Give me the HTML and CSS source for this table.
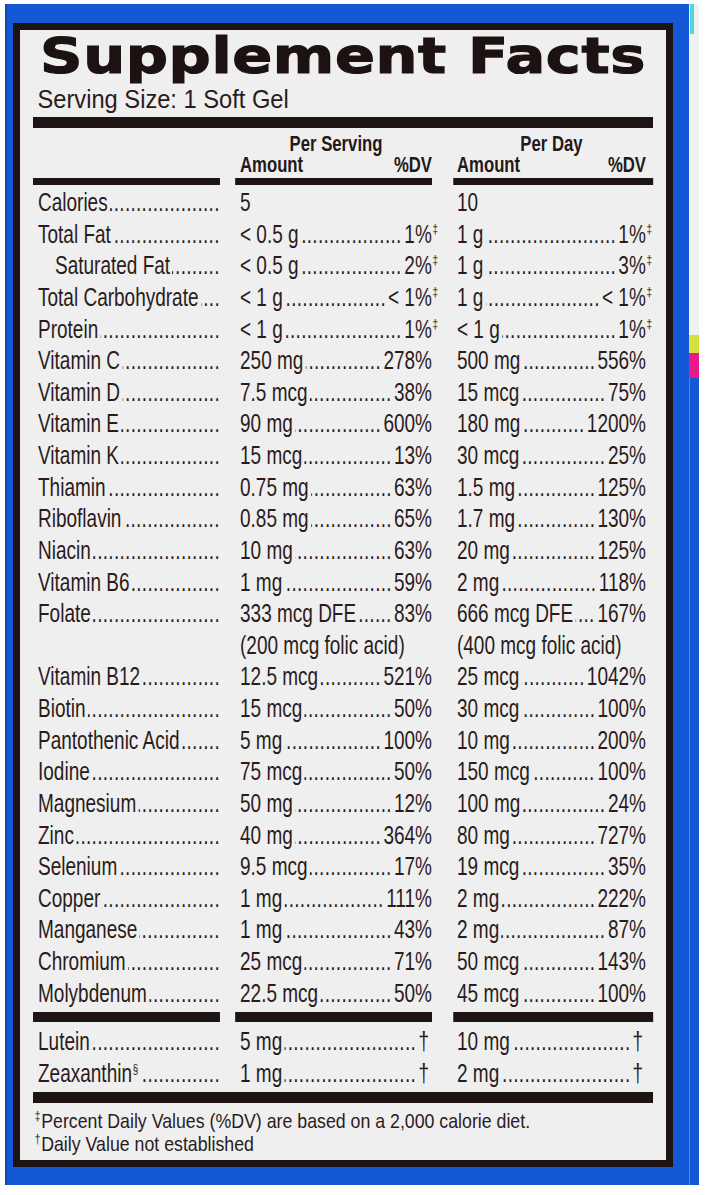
FILE: index.html
```html
<!DOCTYPE html>
<html>
<head>
<meta charset="utf-8">
<link rel="stylesheet" href="styles.css">
</head>
<body>
<div class="page">
  <div class="box">
    <div class="panel">
      <h1 class="title">Supplement Facts</h1>
      <div class="serving">Serving Size: 1 Soft Gel</div>
      <div class="rule thick"></div>
      <div class="table">
        <div class="head">
          <div class="hc c1"><div class="bar"></div></div>
          <div class="hc c2">
            <div class="per">Per Serving</div>
            <div class="sub"><span>Amount</span><span>%DV</span></div>
            <div class="bar"></div>
          </div>
          <div class="hc c3">
            <div class="per">Per Day</div>
            <div class="sub"><span>Amount</span><span>%DV</span></div>
            <div class="bar"></div>
          </div>
        </div>
        <div class="rows">
          <div class="row"><div class="c c1"><span>Calories</span><i class="ld"></i></div><div class="c c2"><span>5</span></div><div class="c c3"><span>10</span></div></div>
          <div class="row"><div class="c c1"><span>Total Fat</span><i class="ld"></i></div><div class="c c2"><span>&lt; 0.5 g</span><i class="ld"></i><span>1%<sup>‡</sup></span></div><div class="c c3"><span>1 g</span><i class="ld"></i><span>1%<sup>‡</sup></span></div></div>
          <div class="row"><div class="c c1 ind"><span>Saturated Fat</span><i class="ld"></i></div><div class="c c2"><span>&lt; 0.5 g</span><i class="ld"></i><span>2%<sup>‡</sup></span></div><div class="c c3"><span>1 g</span><i class="ld"></i><span>3%<sup>‡</sup></span></div></div>
          <div class="row"><div class="c c1"><span>Total Carbohydrate</span><i class="ld"></i></div><div class="c c2"><span>&lt; 1 g</span><i class="ld"></i><span>&lt; 1%<sup>‡</sup></span></div><div class="c c3"><span>1 g</span><i class="ld"></i><span>&lt; 1%<sup>‡</sup></span></div></div>
          <div class="row"><div class="c c1"><span>Protein</span><i class="ld"></i></div><div class="c c2"><span>&lt; 1 g</span><i class="ld"></i><span>1%<sup>‡</sup></span></div><div class="c c3"><span>&lt; 1 g</span><i class="ld"></i><span>1%<sup>‡</sup></span></div></div>
          <div class="row"><div class="c c1"><span>Vitamin C</span><i class="ld"></i></div><div class="c c2"><span>250 mg</span><i class="ld"></i><span>278%</span></div><div class="c c3"><span>500 mg</span><i class="ld"></i><span>556%</span></div></div>
          <div class="row"><div class="c c1"><span>Vitamin D</span><i class="ld"></i></div><div class="c c2"><span>7.5 mcg</span><i class="ld"></i><span>38%</span></div><div class="c c3"><span>15 mcg</span><i class="ld"></i><span>75%</span></div></div>
          <div class="row"><div class="c c1"><span>Vitamin E</span><i class="ld"></i></div><div class="c c2"><span>90 mg</span><i class="ld"></i><span>600%</span></div><div class="c c3"><span>180 mg</span><i class="ld"></i><span>1200%</span></div></div>
          <div class="row"><div class="c c1"><span>Vitamin K</span><i class="ld"></i></div><div class="c c2"><span>15 mcg</span><i class="ld"></i><span>13%</span></div><div class="c c3"><span>30 mcg</span><i class="ld"></i><span>25%</span></div></div>
          <div class="row"><div class="c c1"><span>Thiamin</span><i class="ld"></i></div><div class="c c2"><span>0.75 mg</span><i class="ld"></i><span>63%</span></div><div class="c c3"><span>1.5 mg</span><i class="ld"></i><span>125%</span></div></div>
          <div class="row"><div class="c c1"><span>Riboflavin</span><i class="ld"></i></div><div class="c c2"><span>0.85 mg</span><i class="ld"></i><span>65%</span></div><div class="c c3"><span>1.7 mg</span><i class="ld"></i><span>130%</span></div></div>
          <div class="row"><div class="c c1"><span>Niacin</span><i class="ld"></i></div><div class="c c2"><span>10 mg</span><i class="ld"></i><span>63%</span></div><div class="c c3"><span>20 mg</span><i class="ld"></i><span>125%</span></div></div>
          <div class="row"><div class="c c1"><span>Vitamin B6</span><i class="ld"></i></div><div class="c c2"><span>1 mg</span><i class="ld"></i><span>59%</span></div><div class="c c3"><span>2 mg</span><i class="ld"></i><span>118%</span></div></div>
          <div class="row"><div class="c c1"><span>Folate</span><i class="ld"></i></div><div class="c c2"><span>333 mcg DFE</span><i class="ld"></i><span>83%</span></div><div class="c c3"><span>666 mcg DFE</span><i class="ld"></i><span>167%</span></div></div>
          <div class="row"><div class="c c1"></div><div class="c c2"><span>(200 mcg folic acid)</span></div><div class="c c3"><span>(400 mcg folic acid)</span></div></div>
          <div class="row"><div class="c c1"><span>Vitamin B12</span><i class="ld"></i></div><div class="c c2"><span>12.5 mcg</span><i class="ld"></i><span>521%</span></div><div class="c c3"><span>25 mcg</span><i class="ld"></i><span>1042%</span></div></div>
          <div class="row"><div class="c c1"><span>Biotin</span><i class="ld"></i></div><div class="c c2"><span>15 mcg</span><i class="ld"></i><span>50%</span></div><div class="c c3"><span>30 mcg</span><i class="ld"></i><span>100%</span></div></div>
          <div class="row"><div class="c c1"><span>Pantothenic Acid</span><i class="ld"></i></div><div class="c c2"><span>5 mg</span><i class="ld"></i><span>100%</span></div><div class="c c3"><span>10 mg</span><i class="ld"></i><span>200%</span></div></div>
          <div class="row"><div class="c c1"><span>Iodine</span><i class="ld"></i></div><div class="c c2"><span>75 mcg</span><i class="ld"></i><span>50%</span></div><div class="c c3"><span>150 mcg</span><i class="ld"></i><span>100%</span></div></div>
          <div class="row"><div class="c c1"><span>Magnesium</span><i class="ld"></i></div><div class="c c2"><span>50 mg</span><i class="ld"></i><span>12%</span></div><div class="c c3"><span>100 mg</span><i class="ld"></i><span>24%</span></div></div>
          <div class="row"><div class="c c1"><span>Zinc</span><i class="ld"></i></div><div class="c c2"><span>40 mg</span><i class="ld"></i><span>364%</span></div><div class="c c3"><span>80 mg</span><i class="ld"></i><span>727%</span></div></div>
          <div class="row"><div class="c c1"><span>Selenium</span><i class="ld"></i></div><div class="c c2"><span>9.5 mcg</span><i class="ld"></i><span>17%</span></div><div class="c c3"><span>19 mcg</span><i class="ld"></i><span>35%</span></div></div>
          <div class="row"><div class="c c1"><span>Copper</span><i class="ld"></i></div><div class="c c2"><span>1 mg</span><i class="ld"></i><span>111%</span></div><div class="c c3"><span>2 mg</span><i class="ld"></i><span>222%</span></div></div>
          <div class="row"><div class="c c1"><span>Manganese</span><i class="ld"></i></div><div class="c c2"><span>1 mg</span><i class="ld"></i><span>43%</span></div><div class="c c3"><span>2 mg</span><i class="ld"></i><span>87%</span></div></div>
          <div class="row"><div class="c c1"><span>Chromium</span><i class="ld"></i></div><div class="c c2"><span>25 mcg</span><i class="ld"></i><span>71%</span></div><div class="c c3"><span>50 mcg</span><i class="ld"></i><span>143%</span></div></div>
          <div class="row"><div class="c c1"><span>Molybdenum</span><i class="ld"></i></div><div class="c c2"><span>22.5 mcg</span><i class="ld"></i><span>50%</span></div><div class="c c3"><span>45 mcg</span><i class="ld"></i><span>100%</span></div></div>
        </div>
        <div class="seg-bars"><div class="bar c1"></div><div class="bar c2"></div><div class="bar c3"></div></div>
        <div class="rows rows2">
          <div class="row"><div class="c c1"><span>Lutein</span><i class="ld"></i></div><div class="c c2"><span>5 mg</span><i class="ld"></i><span class="dag">†</span></div><div class="c c3"><span>10 mg</span><i class="ld"></i><span class="dag">†</span></div></div>
          <div class="row"><div class="c c1"><span>Zeaxanthin<sup class="sec">§</sup></span><i class="ld"></i></div><div class="c c2"><span>1 mg</span><i class="ld"></i><span class="dag">†</span></div><div class="c c3"><span>2 mg</span><i class="ld"></i><span class="dag">†</span></div></div>
        </div>
      </div>
      <div class="rule full"></div>
      <div class="notes">
        <p><sup>‡</sup>Percent Daily Values (%DV) are based on a 2,000 calorie diet.</p>
        <p><sup>†</sup>Daily Value not established</p>
      </div>
    </div>
  </div>
  <div class="strip">
    <div class="s-light"><div class="s-cyan"></div></div>
    <div class="s-yellow"></div>
    <div class="s-pink"></div>
    <div class="s-blue"></div>
  </div>
</div>
</body>
</html>
```

FILE: styles.css
```css
* { box-sizing: border-box; }
html, body { margin: 0; padding: 0; background: #ffffff; overflow: hidden; }
body {
  font-family: "Liberation Sans", Arial, sans-serif;
  color: #2a1c1c;
}
.page {
  display: flex;
  align-items: flex-start;
  padding: 4px 0 0 5px;
  height: 1195px;
}
.box {
  width: 684px;
  height: 1181px;
  flex: none;
  background: #1558d6;
  border-left: 2px solid #0e47b8;
  padding: 19px 16px 18px 6px;
}
.panel {
  height: 1144px;
  background: #f0efef;
  border: 7px solid #1f1414;
  padding: 1px 13px 0 13px;
  display: flex;
  flex-direction: column;
  align-items: flex-start;
}
.title {
  margin: 0;
  font-family: "DejaVu Sans", sans-serif;
  font-weight: 700;
  font-size: 50px;
  line-height: 50px;
  letter-spacing: 0.5px;
  padding-left: 6px;
  transform: scaleX(1.18);
  transform-origin: left center;
  white-space: nowrap;
  color: #1c1212;
  -webkit-text-stroke: 1.2px #1c1212;
}
.serving {
  margin-top: 4px;
  font-size: 26px;
  line-height: 28px;
  padding-left: 5px;
  white-space: nowrap;
  transform: scaleX(0.91);
  transform-origin: left center;
}
.rule { background: #1f1414; width: 620px; }
.thick { height: 11px; margin-top: 4px; }

/* condensed table: laid out at 1/k width, then squeezed */
.table {
  --k: 0.76;
  width: calc(620px / 0.76);
  margin-right: calc(620px - 620px / 0.76);
  transform: scaleX(0.76);
  transform-origin: 0 0;
}
.head {
  display: flex;
  align-items: flex-end;
  margin-top: 5px;
}
.c1 { width: calc(187px / var(--k)); flex: none; }
.c2 { width: calc(197px / var(--k)); margin-left: calc(15px / var(--k)); flex: none; }
.c3 { width: calc(200px / var(--k)); margin-left: calc(21px / var(--k)); flex: none; }
.hc { display: flex; flex-direction: column; }
.per, .sub {
  font-weight: 700;
  font-size: 22px;
  line-height: 21px;
  color: #241818;
}
.per { text-align: center; }
.hc.c2 .per, .hc.c2 .sub { padding-left: calc(5px / var(--k)); }
.hc.c3 .per, .hc.c3 .sub { padding-left: calc(4px / var(--k)); padding-right: calc(7px / var(--k)); }
.sub { display: flex; justify-content: space-between; }
.bar { height: 7px; background: #1f1414; }
.hc .bar { margin-top: 3px; }
.rows { margin-top: 2px; }
.rows2 { margin-top: 4px; }
.row { display: flex; height: 31.64px; }
.c {
  display: flex;
  align-items: baseline;
  font-size: 25px;
  line-height: 31.64px;
  white-space: nowrap;
}
.c.c1 { padding-left: calc(5px / var(--k)); }
.c.c1.ind { padding-left: calc(22px / var(--k)); }
.c.c2 { padding-left: calc(5px / var(--k)); }
.c.c3 { padding-left: calc(4px / var(--k)); padding-right: calc(7px / var(--k)); }
.ld {
  flex: 1;
  overflow: hidden;
  margin: 0 3px;
  font-style: normal;
  direction: rtl;
  min-width: 0;
  letter-spacing: 0.4px;
}
.ld::before {
  content: "............................................................................................";
}
.c1 .ld { margin-right: 0; }
sup {
  font-size: 13px;
  line-height: 0;
  vertical-align: 10px;
  margin-right: -8px;
  margin-left: 1px;
}
.sec { margin-right: 0; vertical-align: 9px; font-size: 13px; }
.dag { font-size: 25px; margin-right: 4px; }
.seg-bars { display: flex; margin-top: 3px; }
.seg-bars .bar { height: 10px; }
.full { height: 11px; margin-top: 2px; }
.notes {
  margin-top: 6px;
  padding-left: 2px;
  transform: scaleX(0.845);
  transform-origin: left top;
  white-space: nowrap;
}
.notes p {
  margin: 0;
  font-size: 21px;
  line-height: 23px;
}
.notes sup { font-size: 12px; vertical-align: 8px; margin-right: 1px; margin-left: 0; }
.strip {
  width: 10px;
  flex: none;
  height: 1181px;
  display: flex;
  flex-direction: column;
}
.s-light { height: 331px; background: #eef2f2; padding-left: 1px; }
.s-cyan { width: 4px; height: 30px; background: #52d6d9; }
.s-yellow { height: 18px; background: #d7e03a; }
.s-pink { height: 25px; background: #e8198a; }
.s-blue { flex: 1; background: #1558d6; border-left: 1px solid #5a87e0; }
```
